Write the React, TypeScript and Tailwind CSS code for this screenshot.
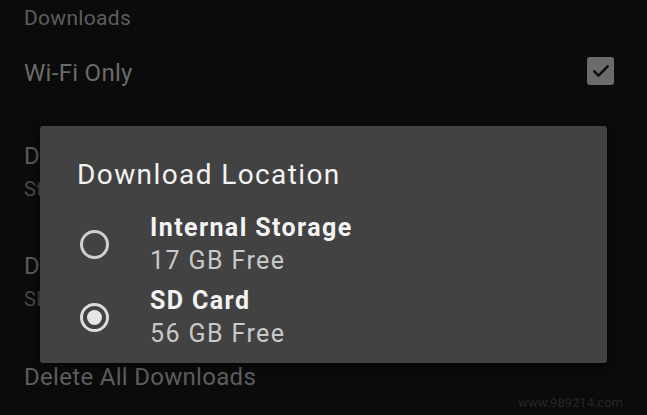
export default function App() {
  return (
    <div
      className="relative w-[647px] h-[415px] overflow-hidden bg-[#0b0b0b]"
      style={{ fontFamily: "Roboto, 'Liberation Sans', sans-serif" }}
    >
      {/* settings list behind the dialog */}
      <div className="flex flex-col pl-[24px] pr-[33px] tracking-[0.3px]">
        <div className="flex items-center h-[38px] text-[21px] text-[#5d5d5d]">Downloads</div>
        <div className="flex items-center justify-between h-[70px]">
          <span className="text-[24px] text-[#6a6a6a]">Wi-Fi Only</span>
          <div className="w-[27px] h-[28px] mb-[4px] rounded-[3px] bg-[#6b6b6b] flex items-center justify-center">
            <svg width="20" height="20" viewBox="0 0 24 24" fill="none" stroke="#0d0d0d" strokeWidth="3" strokeLinecap="round" strokeLinejoin="round">
              <path d="M4 12.5l5 5L20 6.5" />
            </svg>
          </div>
        </div>
        <div className="flex flex-col mt-[32px]">
          <span className="text-[24px] leading-[33px] text-[#5a5a5a]">Download Video Quality</span>
          <span className="text-[20px] leading-[33px] text-[#484848]">Standard</span>
        </div>
        <div className="flex flex-col mt-[44px]">
          <span className="text-[24px] leading-[33px] text-[#5a5a5a]">Download Location</span>
          <span className="text-[20px] leading-[33px] text-[#484848]">SD Card</span>
        </div>
        <div className="mt-[45px] text-[24px] leading-[33px] text-[#5d5d5d]">Delete All Downloads</div>
      </div>

      {/* dialog */}
      <div className="absolute left-[40px] top-[126px] w-[567px] h-[237px] rounded-[3px] bg-[#424242] shadow-[0_2px_8px_rgba(0,0,0,0.6)] pl-[37px] pt-[32px] tracking-[1.4px]">
        <div className="text-[28px] leading-[34px] text-[#f2f2f2]">Download Location</div>
        <div className="flex flex-col mt-[19px] gap-[7px]">
          <div className="flex items-center">
            <div className="ml-[3px] w-[29px] h-[29px] rounded-full border-[3px] border-[#cfcfcf]" />
            <div className="flex flex-col ml-[41px]">
              <span className="text-[25px] leading-[33px] font-bold text-[#f4f4f4]">Internal Storage</span>
              <span className="text-[25px] leading-[33px] text-[#c9c9c9]">17 GB Free</span>
            </div>
          </div>
          <div className="flex items-center">
            <div className="ml-[3px] w-[29px] h-[29px] rounded-full border-[3px] border-[#dcdcdc] flex items-center justify-center">
              <div className="w-[15px] h-[15px] rounded-full bg-[#e6e6e6]" />
            </div>
            <div className="flex flex-col ml-[41px]">
              <span className="text-[25px] leading-[33px] font-bold text-[#f4f4f4]">SD Card</span>
              <span className="text-[25px] leading-[33px] text-[#c9c9c9]">56 GB Free</span>
            </div>
          </div>
        </div>
      </div>

      <div className="absolute right-[24px] bottom-[3px] text-[13px] text-[#262626]">www.989214.com</div>
    </div>
  );
}
